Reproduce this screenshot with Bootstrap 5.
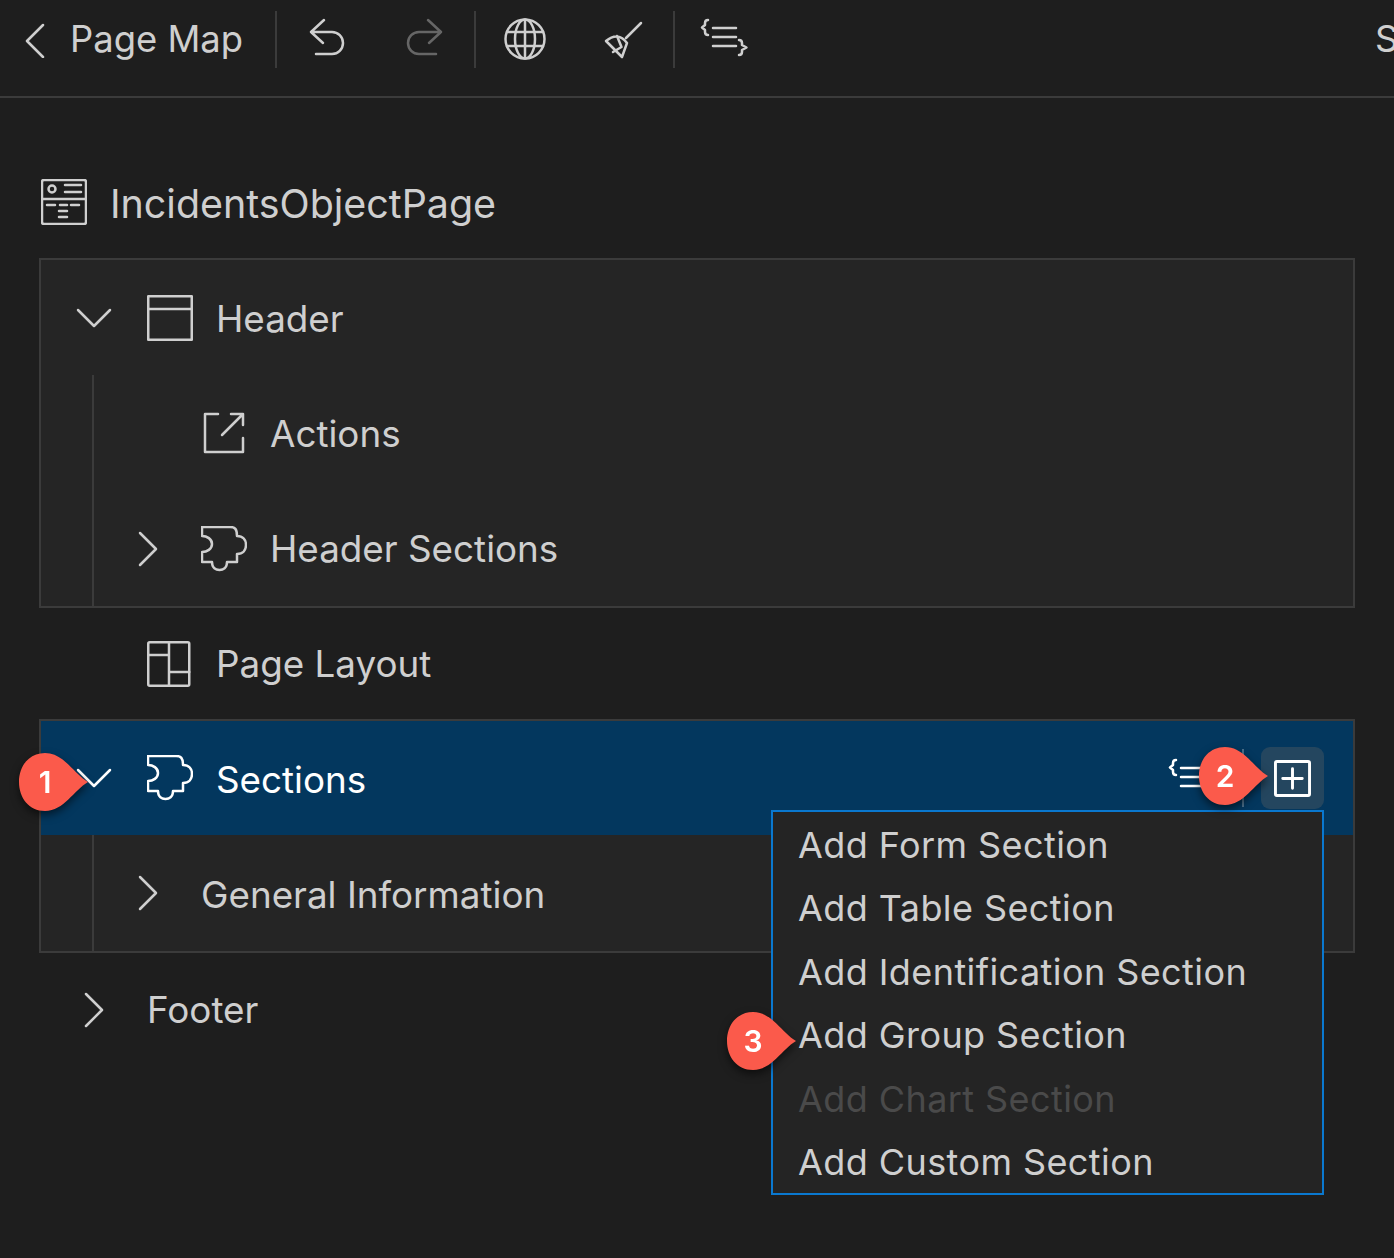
<!DOCTYPE html>
<html lang="en">
<head>
    <meta charset="UTF-8">
    <title>Page Map</title>
    <link href="https://cdn.jsdelivr.net/npm/bootstrap@5.3.0/dist/css/bootstrap.min.css" rel="stylesheet">
    <style>
        body {
            font-family: Inter, "Liberation Sans", sans-serif;
            background-color: #1e1e1e;
            color: #cfcfcf;
            font-size: 36.8px;
            line-height: 44px;
            height: 1258px;
            overflow: hidden;
        }
        svg { display: block; flex: none; fill: none; stroke: currentColor; stroke-width: 2.5; stroke-linecap: round; stroke-linejoin: round; }
        .topbar { height: 98px; border-bottom: 2px solid #3b3b3b; padding-bottom: 18px; overflow: hidden; font-size: 36.4px; }
        .back-group { width: 275px; padding-left: 22px; gap: 22px; }
        .tool-sep { width: 2px; height: 57px; background: #3b3b3b; flex: none; }
        .tool-slot { width: 98.5px; flex: none; color: #cfcfcf; }
        .tool-slot.is-off { color: #666; }
        .clipped-tab { width: 19px; margin-left: auto; overflow: hidden; white-space: nowrap; }
        .page-body { padding: 0 39px; }
        .root-row { height: 112px; margin-top: 48px; gap: 23px; padding-left: 2px; font-size: 39.4px; }
        .tree-box { background: #252525; border: 2px solid #3b3b3b; }
        .tree-row { height: 115px; }
        .plain-row { padding-left: 2px; }
        .plain-row.short { height: 111px; }
        .plain-row.tail { height: 113px; }
        .tree-kids { margin-left: 51px; border-left: 2px solid #3b3b3b; }
        .tree-kids.first-box { padding-top: 1px; }
        .tree-kids .chev-slot { width: 107px; }
        .chev-slot { width: 106px; flex: none; }
        .row-icon { margin-right: 23px; }
        .tree-row.is-current { height: 114px; background: #03375e; color: #fff; }
        .tree-row.is-last { height: 116px; }
        .txt-low { padding-top: 2px; }
        .row-tools { margin-left: auto; margin-right: 29px; }
        .tool-divider { width: 2px; height: 58px; background: #4b6f8a; margin: 0 17px 0 23px; }
        .add-btn { width: 63px; height: 62px; background: #24465f; border-radius: 9px; color: #fff; border: 0; padding: 0; }
        .add-menu.dropdown-menu {
            top: 89px; right: 29px; left: auto; width: 553px;
            background: #242424; border: 2px solid #0a78cf; border-radius: 0; padding: 0;
        }
        .add-menu .dropdown-item {
            height: 63.5px; padding: 2px 0 0 25px; color: #cfcfcf; font-size: 36px; background: none;
            display: flex; align-items: center; letter-spacing: .42px;
        }
        .add-menu .dropdown-item.disabled { color: #4a4a4a; }
        .pin { position: absolute; z-index: 1001; width: 69px; height: 58px; filter: drop-shadow(0 4px 4px rgba(0,0,0,.55)); }
        .pin svg { position: absolute; inset: 0; fill: #fb5a4b; stroke: none; }
        .pin span { position: absolute; left: 0; width: 52px; top: 7px; text-align: center; color: #fff; font-size: 30px; font-weight: 600; }
        .pin-one { left: -22px; top: 32px; }
        .pin-two { left: 1158px; top: 26px; }
        .pin-three { left: 686px; top: 291px; }
    </style>
</head>
<body>
<div class="topbar d-flex align-items-center">
    <div class="back-group d-flex align-items-center">
        <svg width="26" height="38" viewBox="22 20 26 38"><path d="M43 25 27 41 43 57"/></svg>
        <span>Page Map</span>
    </div>
    <div class="tool-sep"></div>
    <div class="tool-slot d-flex justify-content-center">
        <svg width="48" height="48" viewBox="302 15 48 48"><path d="M324 20 311 32 323 43M311 32H332A11 11 0 0 1 332 54H316"/></svg>
    </div>
    <div class="tool-slot is-off d-flex justify-content-center">
        <svg width="48" height="48" viewBox="401 15 48 48"><path d="M428 20 441 32 429 43M441 32H419A11 11 0 0 0 419 54H436"/></svg>
    </div>
    <div class="tool-sep"></div>
    <div class="tool-slot d-flex justify-content-center">
        <svg width="48" height="48" viewBox="501 15 48 48"><circle cx="525" cy="39" r="19.5"/><ellipse cx="525" cy="39" rx="10" ry="19.5"/><path d="M525 20V58M507 32H543M507 46H543"/></svg>
    </div>
    <div class="tool-slot d-flex justify-content-center">
        <svg width="48" height="48" viewBox="599 15 48 48"><path d="M640 23 625 38M605 41Q617 31 626 43L621 57ZM616 36 620.500 47 612 52"/></svg>
    </div>
    <div class="tool-sep"></div>
    <div class="tool-slot d-flex justify-content-center">
        <svg width="52" height="48" viewBox="698 15 52 48"><path d="M708 20Q705 20 705 23V25L702 27.500 705 30V32Q705 35 708 35M713 28H736M713 37H736M713 46H736M739 40Q742 40 742 43V45L746.500 47.500 742 50V52Q742 55 739 55"/></svg>
    </div>
    <div class="clipped-tab">S</div>
</div>

<div class="page-body">
    <div class="root-row d-flex align-items-center">
        <svg width="46" height="46" viewBox="41 180 46 46"><rect x="42" y="181" width="44" height="44" rx="2"/><path d="M42 200H86M65 186H81M65 193H81M47 206H55M60 206H67M71 206H79M59 212H67M59 218H67"/><circle cx="52" cy="190" r="3.5"/></svg>
        <span class="pt-1">IncidentsObjectPage</span>
    </div>

    <div class="tree-box">
        <div class="tree-row d-flex align-items-center">
            <div class="chev-slot d-flex justify-content-center"><svg width="36" height="22" viewBox="0 0 36 22"><path d="M2 3 18 19 34 3"/></svg></div>
            <svg class="row-icon" width="46" height="46" viewBox="0 0 46 46"><rect x="1.25" y="1.25" width="43.5" height="43.5"/><path d="M1.25 14H44.75"/></svg>
            <span class="txt-low">Header</span>
        </div>
        <div class="tree-kids first-box">
            <div class="tree-row d-flex align-items-center">
                <div class="chev-slot"></div>
                <svg class="row-icon" width="46" height="46" viewBox="201 411 46 46"><path d="M218 414H205V452H243V438M222 435 243 414M231 414H243V425"/></svg>
                <span>Actions</span>
            </div>
            <div class="tree-row d-flex align-items-center">
                <div class="chev-slot d-flex justify-content-center"><svg width="22" height="36" viewBox="0 0 22 36"><path d="M3 2 19 18 3 34"/></svg></div>
                <svg class="row-icon" width="46" height="46" viewBox="0 0 46 46"><path d="M1 1H29C34 1 36 3 36 10 42 10 45 14 45 19 45 24 42 28 36 28V36H26C26 42 22 44 18.500 44 15 44 11 42 11 36H1V26C6 26 11 23 11 18 11 13 6 10 1 10Z"/></svg>
                <span>Header Sections</span>
            </div>
        </div>
    </div>

    <div class="tree-row plain-row short d-flex align-items-center">
        <div class="chev-slot"></div>
        <svg class="row-icon" width="46" height="46" viewBox="0 0 46 46"><rect x="1.25" y="1.25" width="41" height="43.5" rx="1.500"/><path d="M22 1.25V44.750M1.25 14H22M22 31H42.250"/></svg>
        <span>Page Layout</span>
    </div>

    <div class="tree-box position-relative">
        <div class="tree-row is-current d-flex align-items-center">
            <div class="chev-slot d-flex justify-content-center"><svg width="36" height="22" viewBox="0 0 36 22"><path d="M2 3 18 19 34 3"/></svg></div>
            <svg class="row-icon" width="46" height="46" viewBox="0 0 46 46"><path d="M1 1H29C34 1 36 3 36 10 42 10 45 14 45 19 45 24 42 28 36 28V36H26C26 42 22 44 18.500 44 15 44 11 42 11 36H1V26C6 26 11 23 11 18 11 13 6 10 1 10Z"/></svg>
            <span class="pt-1">Sections</span>
            <div class="row-tools d-flex align-items-center">
                <svg width="52" height="48" viewBox="699 14 52 48"><path d="M708 20Q705 20 705 23V25L702 27.500 705 30V32Q705 35 708 35M713 28H736M713 37H736M713 46H736"/></svg>
                <div class="tool-divider"></div>
                <button class="add-btn d-flex align-items-center justify-content-center" type="button">
                    <svg width="37" height="37" viewBox="0 0 38 38" stroke-linecap="butt"><rect x="1.500" y="1.500" width="35" height="35" rx="1.500" stroke-width="3"/><path d="M19 9V29M9 19H29" stroke-width="3"/></svg>
                </button>
            </div>
        </div>
        <div class="tree-kids">
            <div class="tree-row is-last d-flex align-items-center">
                <div class="chev-slot d-flex justify-content-center"><svg width="22" height="36" viewBox="0 0 22 36"><path d="M3 2 19 18 3 34"/></svg></div>
                <span class="pt-1">General Information</span>
            </div>
        </div>

        <!-- add section menu, opened from the plus button -->
        <ul class="add-menu dropdown-menu show list-unstyled m-0">
            <li><a class="dropdown-item" href="#">Add Form Section</a></li>
            <li><a class="dropdown-item" href="#">Add Table Section</a></li>
            <li><a class="dropdown-item" href="#">Add Identification Section</a></li>
            <li><a class="dropdown-item" href="#">Add Group Section</a></li>
            <li><a class="dropdown-item disabled" href="#">Add Chart Section</a></li>
            <li><a class="dropdown-item" href="#">Add Custom Section</a></li>
        </ul>

        <div class="pin pin-one"><svg width="69" height="58" viewBox="0 0 69 58"><path d="M69 29C55 21 45 0 26 0 10 0 0 13 0 29 0 45 10 58 26 58 45 58 55 37 69 29Z"/></svg><span>1</span></div>
        <div class="pin pin-two"><svg width="69" height="58" viewBox="0 0 69 58"><path d="M69 29C55 21 45 0 26 0 10 0 0 13 0 29 0 45 10 58 26 58 45 58 55 37 69 29Z"/></svg><span>2</span></div>
        <div class="pin pin-three"><svg width="69" height="58" viewBox="0 0 69 58"><path d="M69 29C55 21 45 0 26 0 10 0 0 13 0 29 0 45 10 58 26 58 45 58 55 37 69 29Z"/></svg><span>3</span></div>
    </div>

    <div class="tree-row plain-row tail d-flex align-items-center">
        <div class="chev-slot d-flex justify-content-center"><svg width="22" height="36" viewBox="0 0 22 36"><path d="M3 2 19 18 3 34"/></svg></div>
        <span>Footer</span>
    </div>
</div>

<script src="https://cdn.jsdelivr.net/npm/bootstrap@5.3.0/dist/js/bootstrap.bundle.min.js"></script>
</body>
</html>
